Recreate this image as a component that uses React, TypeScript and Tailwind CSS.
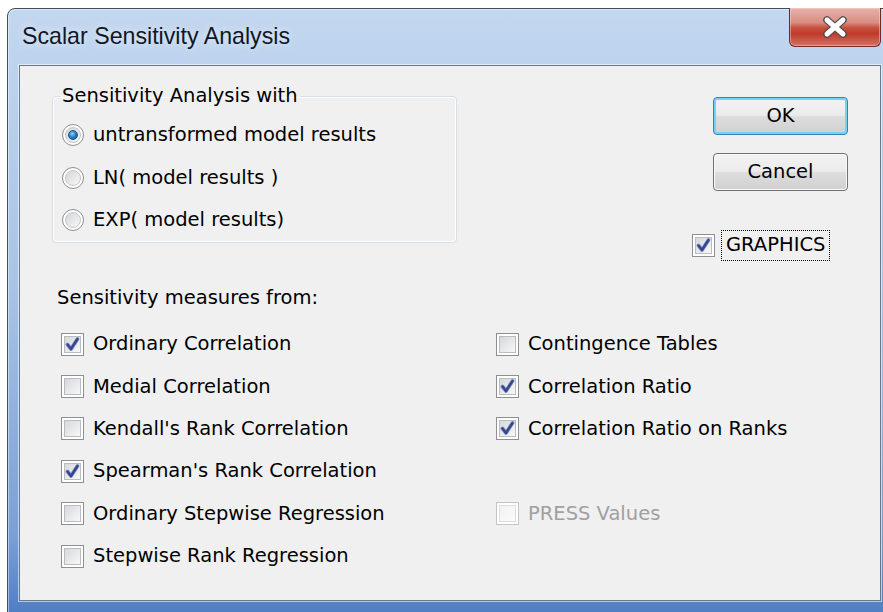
import React from "react";

const ui = { fontFamily: '"DejaVu Sans", sans-serif' };

type Option = { label: string; checked?: boolean; disabled?: boolean } | null;

const CheckMark: React.FC = () => (
  <svg width="17" height="17" viewBox="0 0 17 17" className="absolute left-[2px] top-[2px]">
    <path d="M3.5 8.5 L7 13 L13.5 3" fill="none" stroke="#8d9cc9" strokeWidth="4" strokeLinecap="round" strokeLinejoin="round" />
    <path d="M3.5 8.5 L7 13 L13.5 3" fill="none" stroke="#34468c" strokeWidth="2.4" strokeLinecap="round" strokeLinejoin="round" />
  </svg>
);

const CheckBox: React.FC<{ checked?: boolean; disabled?: boolean }> = ({ checked, disabled }) => (
  <div
    className={
      "relative w-[23px] h-[23px] shrink-0 border bg-white p-[2px] " +
      (disabled ? "border-[#c4c4c4]" : "border-[#8e8f8f]")
    }
  >
    <div
      className={
        "w-full h-full border bg-linear-to-br " +
        (disabled
          ? "border-[#dedede] from-[#f2f2f2] to-[#fbfbfb]"
          : "border-[#b9bcc0] from-[#d6d8db] to-[#f8f8f8]")
      }
    />
    {checked && <CheckMark />}
  </div>
);

const Radio: React.FC<{ checked?: boolean }> = ({ checked }) => (
  <div className="w-[22px] h-[22px] shrink-0 rounded-full border border-[#8e8f8f] bg-white p-[2px]">
    <div className="w-full h-full rounded-full border border-[#c3c5c8] bg-linear-to-br from-[#d3d5d8] to-[#f9f9f9] flex items-center justify-center">
      {checked && (
        <div className="w-[10px] h-[10px] rounded-full border border-[#1b4f86] bg-[radial-gradient(circle_at_40%_35%,#8fd0f5_0%,#2a86c8_45%,#0d4a8a_100%)]" />
      )}
    </div>
  </div>
);

const Button: React.FC<{ label: string; primary?: boolean }> = ({ label, primary }) => (
  <button
    className={
      "w-[135px] h-[38px] rounded-[4px] border text-black flex items-center justify-center " +
      "bg-[linear-gradient(to_bottom,#f3f3f3_0%,#ebebeb_48%,#dddddd_52%,#d0d0d0_100%)] " +
      (primary
        ? "border-[#3c7fb1] shadow-[inset_0_0_0_2px_#70d4f7]"
        : "border-[#707070] shadow-[inset_0_0_0_1px_#fafafa]")
    }
  >
    {label}
  </button>
);

const CloseButton: React.FC = () => (
  <div className="w-[92px] h-[39px] -mt-px rounded-b-[6px] border border-t-0 border-[#6e2a24] bg-[linear-gradient(to_bottom,#e6b2aa_0%,#d98e84_38%,#c8503f_52%,#c03a2b_68%,#d27463_100%)] shadow-[inset_0_0_0_1px_rgba(255,220,215,0.45)] flex items-center justify-center">
    <svg width="26" height="22" viewBox="0 0 26 22">
      <path d="M5 4 L21 18 M21 4 L5 18" stroke="#4a4a4a" strokeWidth="7.5" strokeLinecap="round" />
      <path d="M5 4 L21 18 M21 4 L5 18" stroke="#ffffff" strokeWidth="5" strokeLinecap="round" />
    </svg>
  </div>
);

const measures: Option[] = [
  { label: "Ordinary Correlation", checked: true },
  { label: "Contingence Tables" },
  { label: "Medial Correlation" },
  { label: "Correlation Ratio", checked: true },
  { label: "Kendall's Rank Correlation" },
  { label: "Correlation Ratio on Ranks", checked: true },
  { label: "Spearman's Rank Correlation", checked: true },
  null,
  { label: "Ordinary Stepwise Regression" },
  { label: "PRESS Values", disabled: true },
  { label: "Stepwise Rank Regression" },
  null,
];

const transforms = [
  { label: "untransformed model results", checked: true },
  { label: "LN( model results )" },
  { label: "EXP( model results)" },
];

export default function App() {
  return (
    <div className="w-[883px] h-[612px] bg-white overflow-hidden">
      <div className="ml-[7px] mt-[8px] w-[886px] h-[620px] rounded-t-[8px] rounded-b-[8px] border border-[#3f4d60] bg-[linear-gradient(to_bottom,#c3d7ef_0%,#a8c3e5_45%,#7ba0d6_85%,#4878c0_100%)] shadow-[inset_0_0_0_1px_rgba(255,255,255,0.45)] flex flex-col px-[11px]">
        {/* caption */}
        <div className="h-[56px] flex items-start justify-between">
          <span
            className="self-center ml-[3px] -mt-[1px] text-[23.2px] text-[#101828]"
            style={{ fontFamily: '"Liberation Sans", Arial, sans-serif', textShadow: "0 0 8px rgba(255,255,255,0.8)" }}
          >
            Scalar Sensitivity Analysis
          </span>
          <CloseButton />
        </div>

        {/* client area */}
        <div
          className="h-[536px] border border-[#68778a] bg-[#f0f0f0] shadow-[0_0_0_1px_rgba(255,255,255,0.55)] text-[19.5px] leading-[22px] text-black"
          style={ui}
        >
          <div className="flex items-start">
            <fieldset className="ml-[32px] mt-[19px] w-[405px] h-[158px] border border-[#d5dfe5] rounded-[4px] pl-[9px] pt-[7px] shadow-[inset_0_0_0_1px_#ffffff]">
              <legend className="px-[2px] -ml-[2px]">Sensitivity Analysis with</legend>
              {transforms.map((t) => (
                <div key={t.label} className="h-[42.5px] flex items-center gap-[9px]">
                  <Radio checked={t.checked} />
                  <span>{t.label}</span>
                </div>
              ))}
            </fieldset>

            <div className="ml-auto mr-[32px] mt-[31px] w-[156px] flex flex-col">
              <div className="self-end">
                <Button label="OK" primary />
              </div>
              <div className="self-end mt-[18px]">
                <Button label="Cancel" />
              </div>
              <div className="mt-[39px] h-[30px] flex items-center gap-[6px]">
                <CheckBox checked />
                <span className="h-[31px] px-[4px] flex items-center border border-dotted border-black">GRAPHICS</span>
              </div>
            </div>
          </div>

          <div className="ml-[37px] mt-[27px]">Sensitivity measures from:</div>

          <div className="ml-[41px] mt-[14px] grid grid-cols-[435px_1fr] auto-rows-[42.4px]">
            {measures.map((m, i) =>
              m ? (
                <div key={i} className="flex items-center gap-[9px]">
                  <CheckBox checked={m.checked} disabled={m.disabled} />
                  <span className={m.disabled ? "text-[#a0a0a0]" : ""}>{m.label}</span>
                </div>
              ) : (
                <div key={i} />
              )
            )}
          </div>
        </div>
      </div>
    </div>
  );
}
